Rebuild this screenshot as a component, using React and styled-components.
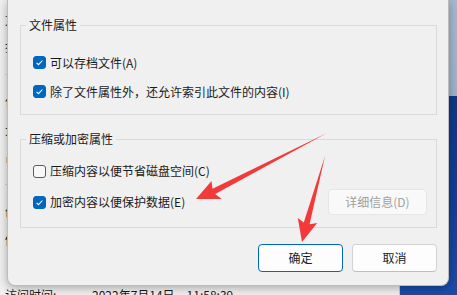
import * as React from "react";
import styled, { createGlobalStyle } from "styled-components";

const GlobalStyle = createGlobalStyle`
  html, body {
    margin: 0;
    padding: 0;
  }
  body {
    width: 457px;
    height: 295px;
    overflow: hidden;
    font-family: "Noto Sans CJK SC", "Noto Sans", sans-serif;
    font-size: 12px;
    color: #1b1b1b;
  }
`;

const Desktop = styled.div`
  position: relative;
  width: 457px;
  height: 295px;
  overflow: hidden;
  background: linear-gradient(to bottom, #a8b9cd 0, #9fb2c9 96px, #0c3889 96px, #123f98 200px, #1b4ca8 295px);
`;

// properties window behind the dialog
const BackWindow = styled.div`
  position: absolute;
  left: -20px;
  top: 0;
  width: 420px;
  height: 320px;
  box-sizing: border-box;
  padding: 6px 0 0 25px;
  background: #f0f0f0;
  border-right: 1px solid #c4c4c4;
`;

const InfoRow = styled.div`
  display: grid;
  grid-template-columns: 87px 1fr;
  align-items: center;
  height: 27.5px;
  line-height: 16px;
  white-space: nowrap;
`;

const Separator = styled.div`
  display: flex;
  align-items: center;
  height: 27.5px;

  &::before {
    content: "";
    width: 370px;
    height: 1px;
    background: #d4d4d4;
  }
`;

const Dialog = styled.div`
  position: absolute;
  left: 7px;
  top: 0;
  width: 442px;
  height: 286px;
  box-sizing: border-box;
  display: flex;
  flex-direction: column;
  padding: 17px 11px 13px 12px;
  background: #f0f0f0;
  border: 1px solid #bcbcbc;
  border-top: none;
  border-radius: 0 0 8px 8px;
  box-shadow: 0 2px 10px rgba(0, 0, 0, 0.3);
`;

const Group = styled.fieldset`
  margin: ${(p) => (p.$first ? "0" : "16px 0 0")};
  padding: ${(p) => p.$pt}px 9px ${(p) => p.$pb}px 12px;
  min-width: 0;
  border: 1px solid #dadada;
  border-radius: 0;

  legend {
    margin-left: -7px;
    padding: 0 3px;
    font-size: 12px;
    line-height: 16px;
  }
`;

const CheckRow = styled.div`
  display: flex;
  align-items: center;
  justify-content: space-between;
  height: ${(p) => p.$h}px;
`;

const CheckLabel = styled.label`
  display: flex;
  align-items: center;
  gap: 4px;
  line-height: 16px;
  white-space: nowrap;
`;

const Box = styled.span`
  flex: none;
  width: 13px;
  height: 13px;
  box-sizing: border-box;
  display: grid;
  place-items: center;
  border-radius: 3px;
  background: ${(p) => (p.$checked ? "#0067c0" : "#f8f8f8")};
  border: 1px solid ${(p) => (p.$checked ? "#0067c0" : "#5c5c5c")};
`;

const Button = styled.button`
  width: ${(p) => p.$w || 85}px;
  height: ${(p) => p.$h || 28}px;
  box-sizing: border-box;
  padding: 0;
  border-radius: 4px;
  font-family: inherit;
  font-size: 12px;
  line-height: 16px;
  background: ${(p) => (p.disabled ? "#f9f9f9" : "#fdfdfd")};
  color: ${(p) => (p.disabled ? "#a0a0a0" : "#1b1b1b")};
  border: 1px solid
    ${(p) => (p.$primary ? "#0067c0" : p.disabled ? "#e6e6e6" : "#d2d2d2")};
  border-bottom-color: ${(p) =>
    p.$primary ? "#0067c0" : p.disabled ? "#e6e6e6" : "#bfbfbf"};
`;

const ButtonBar = styled.div`
  display: flex;
  justify-content: flex-end;
  gap: 9px;
  margin-top: 16px;
`;

const Overlay = styled.svg`
  position: absolute;
  left: 0;
  top: 0;
  pointer-events: none;
`;

const CheckBox = ({ checked, children }) => (
  <CheckLabel>
    <Box $checked={checked}>
      {checked ? (
        <svg width="11" height="11" viewBox="0 0 11 11">
          <path d="M2.6 5.8l1.9 1.9 3.9-4.2" fill="none" stroke="#fff" strokeWidth="1.1" />
        </svg>
      ) : null}
    </Box>
    {children}
  </CheckLabel>
);

const backRows = [
  "文件类型:",
  "打开方式:",
  null,
  "位置:",
  "大小:",
  "占用空间:",
  null,
  "创建时间:",
  "修改时间:",
  "",
];

export default function App() {
  return (
    <>
      <GlobalStyle />
      <Desktop>
        <BackWindow>
          {backRows.map((r, i) =>
            r === null ? (
              <Separator key={i} />
            ) : (
              <InfoRow key={i}>
                <span>{r}</span>
              </InfoRow>
            )
          )}
          <InfoRow>
            <span>访问时间:</span>
            <span>2022年7月14日，11:58:39</span>
          </InfoRow>
        </BackWindow>

        <Dialog>
          <Group $first $pt={15} $pb={8}>
            <legend>文件属性</legend>
            <CheckRow $h={29}>
              <CheckBox checked>可以存档文件(A)</CheckBox>
            </CheckRow>
            <CheckRow $h={29}>
              <CheckBox checked>除了文件属性外，还允许索引此文件的内容(I)</CheckBox>
            </CheckRow>
          </Group>

          <Group $pt={9} $pb={9}>
            <legend>压缩或加密属性</legend>
            <CheckRow $h={30}>
              <CheckBox>压缩内容以便节省磁盘空间(C)</CheckBox>
            </CheckRow>
            <CheckRow $h={32}>
              <CheckBox checked>加密内容以便保护数据(E)</CheckBox>
              <Button disabled $w={99} $h={26}>
                详细信息(D)
              </Button>
            </CheckRow>
          </Group>

          <ButtonBar>
            <Button $primary>确定</Button>
            <Button>取消</Button>
          </ButtonBar>
        </Dialog>

        {/* red annotation arrows */}
        <Overlay width="457" height="295" viewBox="0 0 457 295">
          <polygon
            points="327,133 212.5,188.7 211.5,181 196,199 221.7,199 215.2,194"
            fill="#f23a3a"
          />
          <polygon
            points="325,156 303.8,222.6 297.8,217.9 302,242 317.2,223.1 309.6,224.2"
            fill="#f23a3a"
          />
        </Overlay>
      </Desktop>
    </>
  );
}
